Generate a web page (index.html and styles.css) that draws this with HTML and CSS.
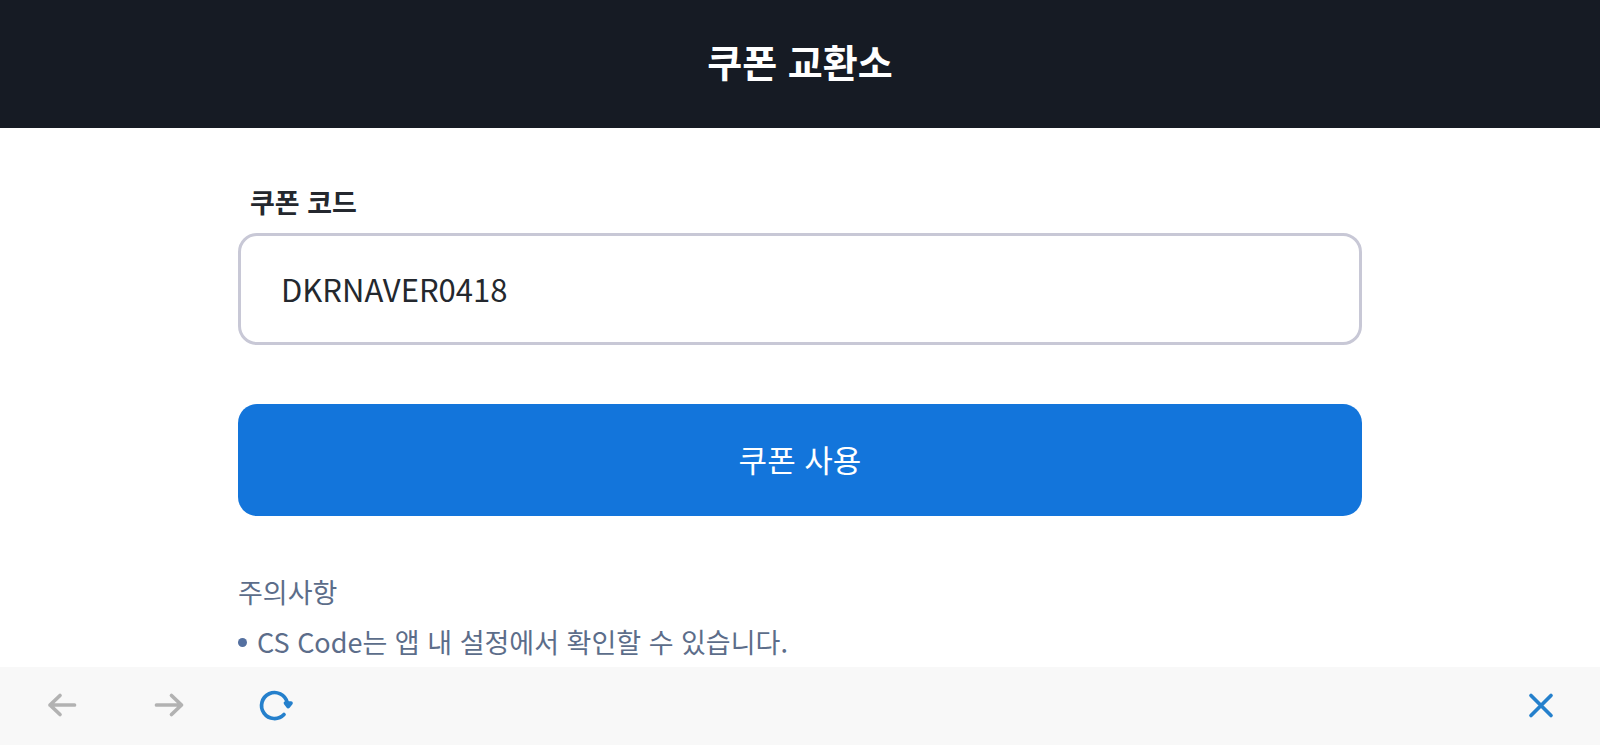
FILE: index.html
```
<!DOCTYPE html>
<html lang="ko">
<head>
  <meta charset="UTF-8" />
  <meta name="viewport" content="width=device-width, initial-scale=1" />
  <title>쿠폰 교환소</title>
  <link rel="stylesheet" href="styles.css">
</head>
<body>

<header class="header">
  <h1>쿠폰 교환소</h1>
</header>

<main class="content">
  <form class="coupon-form">
    <label for="couponCode">쿠폰 코드</label>
    <input type="text" id="couponCode" value="DKRNAVER0418" autocomplete="off" spellcheck="false" />
    <button type="button" class="submit">쿠폰 사용</button>
  </form>

  <section class="notice">
    <h2>주의사항</h2>
    <ul>
      <li>CS Code는 앱 내 설정에서 확인할 수 있습니다.</li>
    </ul>
  </section>
</main>

<nav class="toolbar">
  <button type="button" aria-label="뒤로" disabled>
    <svg viewBox="0 0 44 44"><path d="M34.500 22H10M20 12.500L10 22L20 31.500" /></svg>
  </button>
  <button type="button" aria-label="앞으로" disabled>
    <svg viewBox="0 0 44 44"><path d="M9.500 22H34M24.500 12.500L34.500 22L24.500 31.500" /></svg>
  </button>
  <button type="button" aria-label="새로고침">
    <svg viewBox="0 0 44 44">
      <path d="M30 31.500A13 13 0 1 1 33.200 19.500" />
      <path class="arrow" d="M31.500 20H37L34.200 23.500Z" />
    </svg>
  </button>
  <button type="button" class="close" aria-label="닫기">
    <svg viewBox="0 0 44 44"><path d="M12 12.500L32 32.500M32 12.500L12 32.500" /></svg>
  </button>
</nav>

</body>
</html>
```
FILE: styles.css
```
* {
  box-sizing: border-box;
}

body {
  font-family: "Noto Sans CJK KR", sans-serif;
  background: #fff;
  color: #24282e;
  margin: 0;
  min-height: 100vh;
  display: flex;
  flex-direction: column;
}

.header {
  background: #161b24;
  color: white;
  padding: 32px 20px 38px;
  text-align: center;
}

.header h1 {
  margin: 0;
  font-size: 38px;
  line-height: 58px;
}

.content {
  flex: 1;
  width: 100%;
  max-width: 1164px;
  margin: 0 auto;
  padding: 54px 20px 0;
}

.coupon-form {
  display: flex;
  flex-direction: column;
}

.coupon-form label {
  padding: 0 12px;
  margin-bottom: 11px;
  font-size: 27px;
  font-weight: bold;
  line-height: 40px;
}

.coupon-form input {
  width: 100%;
  height: 112px;
  padding: 0 40px 2px;
  border: 3px solid #c8c8d6;
  border-radius: 19px;
  background: white;
  color: inherit;
  font-family: inherit;
  font-size: 31px;
  outline: none;
}

.coupon-form .submit {
  height: 112px;
  margin-top: 59px;
  padding: 0 0 4px;
  border: none;
  border-radius: 19px;
  background: #1375db;
  color: white;
  font-family: inherit;
  font-size: 31px;
  cursor: pointer;
}

.notice {
  margin-top: 51px;
  color: #5c6d8a;
  font-size: 27px;
  line-height: 50px;
}

.notice h2 {
  margin: 0;
  font-size: 27px;
  font-weight: normal;
}

.notice ul {
  list-style: none;
  margin: 0;
  padding: 0;
}

.notice li {
  display: flex;
  align-items: center;
  gap: 10px;
}

.notice li::before {
  content: "";
  width: 9px;
  height: 9px;
  border-radius: 50%;
  background: #5470a0;
}

.toolbar {
  position: sticky;
  bottom: 0;
  display: flex;
  align-items: center;
  gap: 63px;
  height: 78px;
  padding: 0 37px 2px 40px;
  background: #f8f8f8;
}

.toolbar button {
  width: 44px;
  height: 44px;
  padding: 0;
  border: none;
  background: none;
  color: #2580cc;
  cursor: pointer;
}

.toolbar button:disabled {
  color: #b2b2b2;
  cursor: default;
}

.toolbar .close {
  margin-left: auto;
}

.toolbar svg {
  display: block;
  fill: none;
  stroke: currentColor;
  stroke-width: 3.7;
  stroke-linecap: round;
  stroke-linejoin: round;
}

.toolbar .arrow {
  fill: currentColor;
}
```
